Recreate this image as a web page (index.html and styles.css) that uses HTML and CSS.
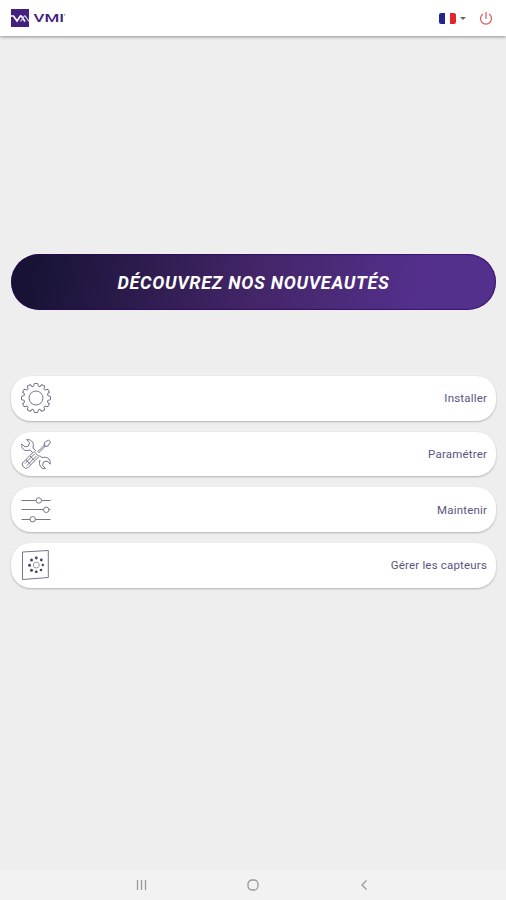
FILE: index.html
```html
<!DOCTYPE html>
<html lang="fr">
<head>
    <meta charset="UTF-8">
    <meta name="viewport" content="width=device-width, initial-scale=1.0">
    <title>VMI</title>
    <link rel="stylesheet" href="styles.css">
</head>
<body>

    <header class="header">
        <svg class="logo" viewBox="0 0 56 18">
            <rect width="18" height="18" fill="#43207f"/>
            <path d="M0 7h2.500l3.500 5 3-4.500q.8-1.200 1.600 0L14 12.500" fill="none" stroke="#fff" stroke-width="1.700"/>
            <path d="M9.500 12.500l3.500-5q.8-1.100 1.600 0L18 12.500" fill="none" stroke="#d8cde8" stroke-width="1.300"/>
            <text class="logo-text" x="22.500" y="13" textLength="30.500" lengthAdjust="spacingAndGlyphs">VMI</text>
            <text class="logo-mark" x="52.800" y="9.500">'</text>
        </svg>
        <div class="header-actions">
            <button class="lang-btn" aria-label="Langue">
                <span class="flag"></span>
                <span class="caret"></span>
            </button>
            <button class="power-btn" aria-label="Quitter">
                <svg width="14" height="14" viewBox="0 0 14 14" fill="none" stroke="#d9656a" stroke-width="1.300">
                    <path d="M4 3A5.500 5.500 0 1 0 10 3M7 1v7"/>
                </svg>
            </button>
        </div>
    </header>

    <main class="content">
        <button class="news-btn">DÉCOUVREZ NOS NOUVEAUTÉS</button>

        <nav class="menu">
            <button class="menu-item">
                <svg class="icon" viewBox="-16 -16 32 32">
                    <defs>
                        <path id="tooth" d="M-3.100-11.600L-2.400-11.800L-1.700-14.500H1.700L2.400-11.800L3.100-11.600"/>
                    </defs>
                    <use href="#tooth"/>
                    <use href="#tooth" transform="rotate(30)"/>
                    <use href="#tooth" transform="rotate(60)"/>
                    <use href="#tooth" transform="rotate(90)"/>
                    <use href="#tooth" transform="rotate(120)"/>
                    <use href="#tooth" transform="rotate(150)"/>
                    <use href="#tooth" transform="rotate(180)"/>
                    <use href="#tooth" transform="rotate(210)"/>
                    <use href="#tooth" transform="rotate(240)"/>
                    <use href="#tooth" transform="rotate(270)"/>
                    <use href="#tooth" transform="rotate(300)"/>
                    <use href="#tooth" transform="rotate(330)"/>
                    <circle r="7"/>
                </svg>
                <span>Installer</span>
            </button>

            <button class="menu-item">
                <svg class="icon" viewBox="0 0 32 32">
                    <!-- wrench -->
                    <path d="M6.500 1.700L9.500 4.500L8.500 8L5 8.800L1.800 6C1 9.500 3.500 13 7.500 12.500L10 12L12.500 14.500M6.500 1.700C10.500 1 14 4 13.300 8L13 10L16 13M20 22L19.500 24C19 28 22 31.500 25.500 30.500L22.600 27.500L23.500 24L27 23L30.200 26.200C31 22 28 18.700 24 19.300L22 19.700L19.500 17.500"/>
                    <!-- screwdriver -->
                    <path d="M17.500 14L25 6.500M18.500 15L26 7.500M24 8L24.500 4.500L28.500 2L30.500 4L28 8L24.500 8.500"/>
                    <path d="M2.500 25L14 13.500L19 18.500L7.500 30Q5.500 31 3.500 29T2.500 25ZM5 25.500L14.500 16M7 27.500L16.500 18M6 22L10.500 26.500M10 18L14.500 22.500"/>
                </svg>
                <span>Paramétrer</span>
            </button>

            <button class="menu-item">
                <svg class="icon" viewBox="0 0 32 32">
                    <path d="M1.500 6.500H16M21.500 6.500H30.500M1.500 15.500H23.500M29 15.500H30.500M1.500 25.500H10M15.500 25.500H30.500"/>
                    <circle cx="18.800" cy="6.500" r="2.700"/>
                    <circle cx="26.200" cy="15.800" r="2.700"/>
                    <circle cx="12.700" cy="25.200" r="2.700"/>
                </svg>
                <span>Maintenir</span>
            </button>

            <button class="menu-item">
                <svg class="icon" viewBox="0 0 32 32">
                    <path d="M2.500 3L28.300 1.500V28.500L2.500 30.500Z"/>
                    <circle cx="16.300" cy="16" r="3" stroke="#9a97ad"/>
                    <g class="dots">
                        <circle cx="16.300" cy="9" r="1.400"/>
                        <circle cx="21.300" cy="11" r="1.400"/>
                        <circle cx="22.800" cy="16" r="1.200"/>
                        <circle cx="21" cy="21" r="1.300"/>
                        <circle cx="16.300" cy="22.800" r="1.400"/>
                        <circle cx="11.500" cy="21.300" r="1.500"/>
                        <circle cx="9.500" cy="16.300" r="1.500"/>
                        <circle cx="11.500" cy="11" r="1.500"/>
                    </g>
                </svg>
                <span>Gérer les capteurs</span>
            </button>
        </nav>
    </main>

    <footer class="system-bar">
        <svg width="12" height="12" viewBox="0 0 12 12"><path d="M1.500 1v10M5.500 1v10M9.500 1v10"/></svg>
        <svg width="12" height="12" viewBox="0 0 12 12"><rect x="1" y="1" width="10" height="10" rx="4"/></svg>
        <svg width="12" height="12" viewBox="0 0 12 12"><path d="M8.500 1.500L4 6l4.500 4.500"/></svg>
    </footer>

</body>
</html>
```

FILE: styles.css
```css
/* General Styles */
* {
    box-sizing: border-box;
}
body {
    font-family: Roboto, 'Liberation Sans', sans-serif;
    margin: 0;
    height: 100vh;
    display: flex;
    flex-direction: column;
    background: #eee;
    color: #5b5380;
}
button {
    font-family: inherit;
    color: inherit;
    border: none;
    background: none;
    padding: 0;
    cursor: pointer;
}

/* Header */
.header {
    height: 36px;
    padding: 0 13px 0 10.500px;
    display: flex;
    justify-content: space-between;
    align-items: center;
    background: white;
    box-shadow: 0 1px 3px rgba(0, 0, 0, 0.4);
}
.logo {
    width: 56px;
    height: 18px;
}
.logo-text {
    font-size: 11px;
    font-weight: 500;
    fill: #43207f;
}
.logo-mark {
    font-size: 8px;
    fill: #43207f;
}
.header-actions {
    display: flex;
    align-items: center;
    gap: 13px;
}
.lang-btn {
    display: flex;
    align-items: center;
    gap: 4px;
}
.flag {
    width: 17px;
    height: 11px;
    border-radius: 2px;
    background: linear-gradient(90deg, #25258f 35%, #fff 35%, #fff 66%, #e3262e 66%);
}
.caret {
    border: 3.500px solid transparent;
    border-top-color: #666;
    border-bottom: none;
}
.power-btn {
    height: 14px;
    display: flex;
}

/* Content */
.content {
    flex: 1;
    padding: 218px 10px 0 11px;
}
.news-btn {
    display: block;
    width: 100%;
    height: 56px;
    border-radius: 28px;
    background: linear-gradient(100deg, #181335 5%, #432568 50%, #54308d 85%);
    box-shadow: inset 0 0 1px 1px rgba(45, 0, 95, 0.6);
    color: white;
    font-size: 18px;
    font-weight: bold;
    font-style: italic;
    letter-spacing: 0.72px;
}

/* Menu */
.menu {
    margin-top: 66px;
    display: flex;
    flex-direction: column;
    gap: 11px;
}
.menu-item {
    height: 44.700px;
    padding: 0 9px 0 8.500px;
    display: flex;
    justify-content: space-between;
    align-items: center;
    border-radius: 20px;
    background: white;
    box-shadow: 0 1px 2px rgba(0, 0, 0, 0.25);
    font-size: 11.500px;
    letter-spacing: 0.18px;
}
.icon {
    width: 32px;
    height: 32px;
    fill: none;
    stroke: #77738f;
    stroke-width: 1;
}
.dots {
    fill: #45416b;
    stroke: none;
}

/* System bar */
.system-bar {
    height: 30px;
    padding: 0 136px;
    display: flex;
    justify-content: space-between;
    align-items: center;
    background: #f2f2f2;
}
.system-bar svg {
    fill: none;
    stroke: #999;
    stroke-width: 1.300;
}
```
